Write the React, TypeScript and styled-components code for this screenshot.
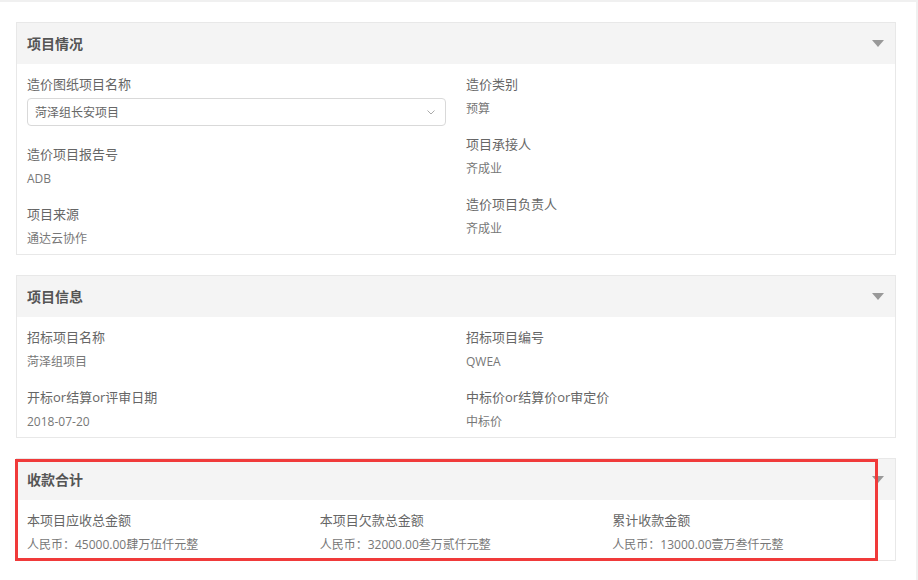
import React from "react";
import styled, { createGlobalStyle } from "styled-components";

const GlobalStyle = createGlobalStyle`
  html, body {
    margin: 0;
    padding: 0;
    background: #f0f0f0;
    font-family: "Open Sans", "Noto Sans CJK SC", sans-serif;
  }
  * { box-sizing: border-box; }
`;

const Page = styled.div`
  margin-top: 2px;
  width: 916px;
  background: #fff;
  padding: 20px 20px 40px 16px;
`;

const Panel = styled.section`
  position: relative;
  border: 1px solid #e8e8e8;
  margin-bottom: 20px;
  &:last-child { margin-bottom: 0; }
`;

const Header = styled.div`
  height: 41px;
  background: #f4f4f4;
  display: flex;
  align-items: center;
  justify-content: space-between;
  padding: 0 11px 0 10px;
`;

const Title = styled.h3`
  margin: 0;
  font-size: 14px;
  font-weight: 700;
  color: #555;
  line-height: 20px;
`;

const Body = styled.div<{ $cols: number }>`
  display: grid;
  grid-template-columns: repeat(${(p) => p.$cols}, 1fr);
  padding: 10px 0 6px;
  align-items: start;
`;

const Column = styled.div`
  display: flex;
  flex-direction: column;
  gap: 16px;
  padding: 0 10px;
  min-width: 0;
`;

const Field = styled.div<{ $withInput?: boolean }>`
  display: flex;
  flex-direction: column;
  gap: 4px;
  margin-bottom: ${(p) => (p.$withInput ? "2px" : "0")};
`;

const Label = styled.div`
  font-size: 13px;
  line-height: 20px;
  color: #666;
`;

const Value = styled.div`
  margin-top: 2px;
  font-size: 12px;
  line-height: 18px;
  color: #777;
`;

const Select = styled.div`
  height: 28px;
  border: 1px solid #d9d9d9;
  border-radius: 4px;
  padding: 0 10px 0 7px;
  display: flex;
  align-items: center;
  justify-content: space-between;
  font-size: 12px;
  color: #666;
  background: #fff;
`;

const Highlight = styled.div`
  position: absolute;
  left: -2px;
  top: 0;
  width: 863px;
  height: 102px;
  border: 3px solid #f03a3a;
  pointer-events: none;
`;

const Caret = () => (
  <svg width="12" height="7" viewBox="0 0 12 7">
    <path d="M0 0 H12 L6 7 Z" fill="#999" />
  </svg>
);

const Chevron = () => (
  <svg width="8" height="5" viewBox="0 0 8 5">
    <path d="M0.5 0.5 L4 4 L7.5 0.5" fill="none" stroke="#aaa" strokeWidth="1" />
  </svg>
);

type F = { label: string; value: string };

const FieldItem = ({ label, value }: F) => (
  <Field>
    <Label>{label}</Label>
    <Value>{value}</Value>
  </Field>
);

export default function App() {
  return (
    <>
      <GlobalStyle />
      <Page>
        <Panel>
          <Header>
            <Title>项目情况</Title>
            <Caret />
          </Header>
          <Body $cols={2}>
            <Column>
              <Field $withInput>
                <Label>造价图纸项目名称</Label>
                <Select>
                  <span>菏泽组长安项目</span>
                  <Chevron />
                </Select>
              </Field>
              <FieldItem label="造价项目报告号" value="ADB" />
              <FieldItem label="项目来源" value="通达云协作" />
            </Column>
            <Column>
              <FieldItem label="造价类别" value="预算" />
              <FieldItem label="项目承接人" value="齐成业" />
              <FieldItem label="造价项目负责人" value="齐成业" />
            </Column>
          </Body>
        </Panel>

        <Panel>
          <Header>
            <Title>项目信息</Title>
            <Caret />
          </Header>
          <Body $cols={2}>
            <Column>
              <FieldItem label="招标项目名称" value="菏泽组项目" />
              <FieldItem label="开标or结算or评审日期" value="2018-07-20" />
            </Column>
            <Column>
              <FieldItem label="招标项目编号" value="QWEA" />
              <FieldItem label="中标价or结算价or审定价" value="中标价" />
            </Column>
          </Body>
        </Panel>

        <Panel>
          <Header>
            <Title>收款合计</Title>
            <Caret />
          </Header>
          <Body $cols={3}>
            <Column>
              <FieldItem label="本项目应收总金额" value="人民币：45000.00肆万伍仟元整" />
            </Column>
            <Column>
              <FieldItem label="本项目欠款总金额" value="人民币：32000.00叁万贰仟元整" />
            </Column>
            <Column>
              <FieldItem label="累计收款金额" value="人民币：13000.00壹万叁仟元整" />
            </Column>
          </Body>
          <Highlight />
        </Panel>
      </Page>
    </>
  );
}
